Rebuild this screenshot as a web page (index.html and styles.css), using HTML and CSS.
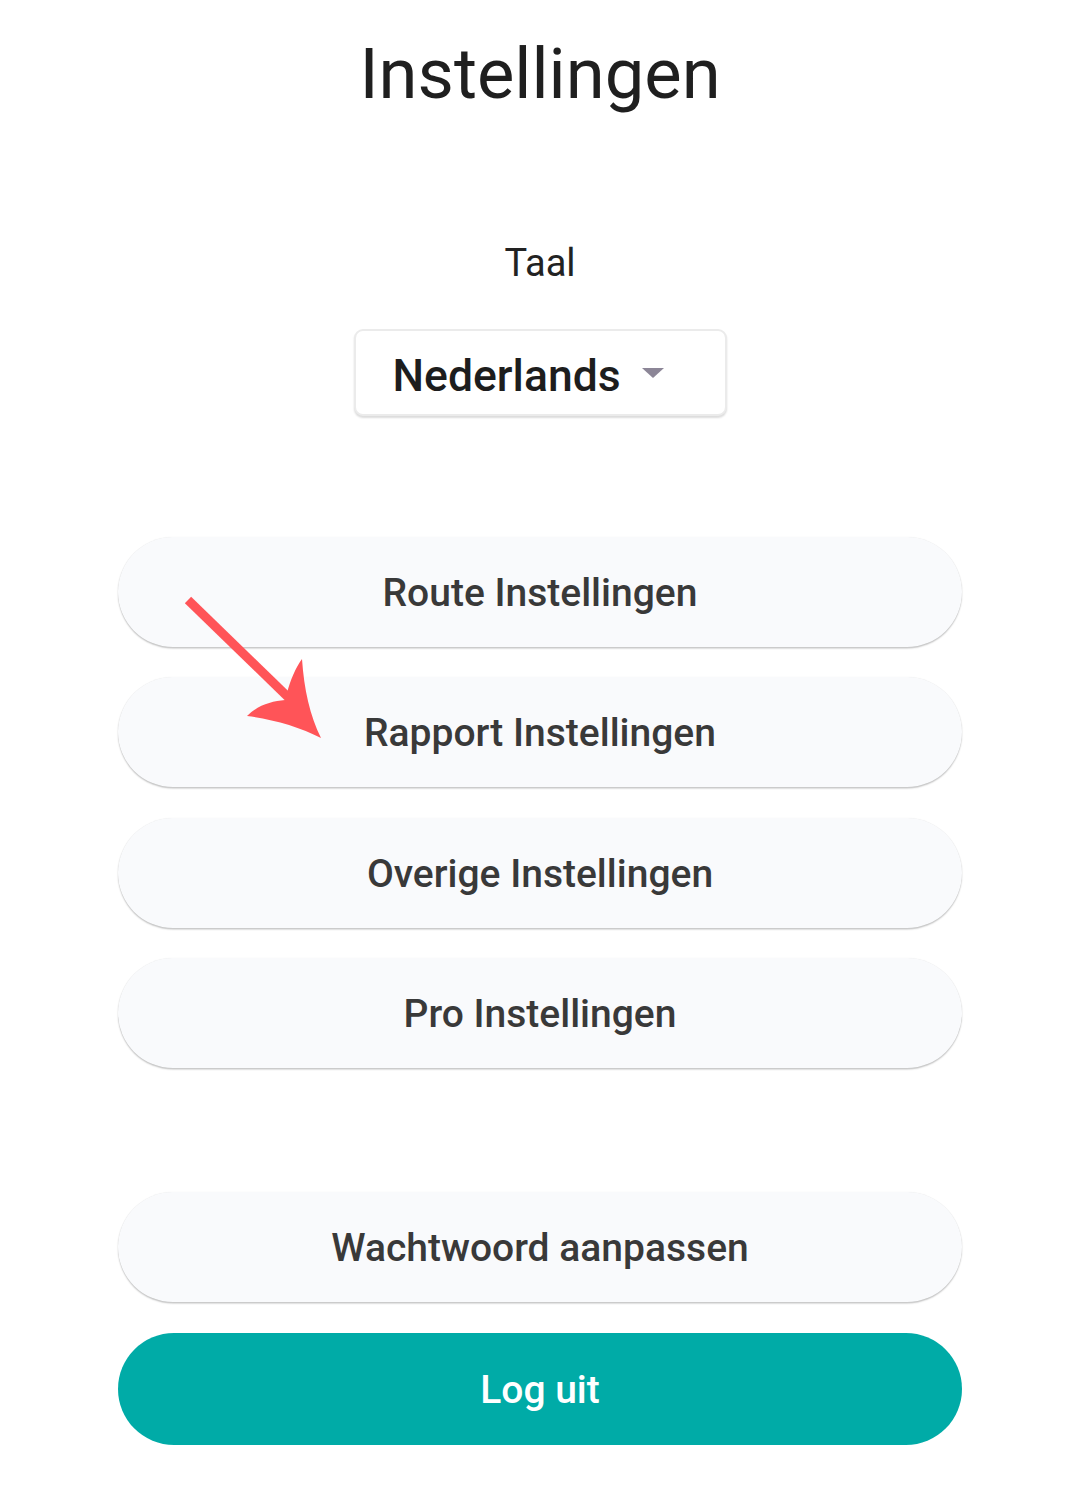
FILE: index.html
```html
<!DOCTYPE html>
<html lang="nl">
<head>
<meta charset="utf-8">
<title>Instellingen</title>
<link rel="stylesheet" href="styles.css">
</head>
<body>
<main class="page">
  <h1 class="title">Instellingen</h1>
  <div class="label">Taal</div>
  <div class="select-wrap">
    <div class="select">
      <span class="select-value">Nederlands</span>
      <span class="caret"></span>
    </div>
  </div>
  <div class="menu">
    <button class="btn">Route Instellingen</button>
    <button class="btn">Rapport Instellingen</button>
    <button class="btn">Overige Instellingen</button>
    <button class="btn">Pro Instellingen</button>
    <svg class="pointer" viewBox="178 588 160 160" width="160" height="160" aria-hidden="true">
      <line x1="188" y1="601" x2="290" y2="700" stroke="#ff5458" stroke-width="9"/>
      <path d="M247,717 C258,706 272,702 285,701 L287,694 C290,682 296,668 302,660 C304,690 310,717 321,739 C300,728 272,720 247,717 Z" fill="#ff5458"/>
    </svg>
  </div>
  <div class="account">
    <button class="btn">Wachtwoord aanpassen</button>
    <button class="btn btn-primary">Log uit</button>
  </div>
</main>
</body>
</html>
```

FILE: styles.css
```css
* { box-sizing: border-box; }
html, body {
  margin: 0;
  padding: 0;
  background: #ffffff;
}
body {
  font-family: Roboto, "Noto Sans", "Liberation Sans", sans-serif;
  color: #212121;
}
.page {
  width: 844px;
  margin: 0 auto;
  padding-top: 33px;
  display: flex;
  flex-direction: column;
}
.title {
  margin: 0;
  font-size: 70.5px;
  font-weight: 400;
  line-height: 82px;
  text-align: center;
  color: #1f1f1f;
}
.label {
  margin-top: 126px;
  font-size: 38px;
  line-height: 45px;
  text-align: center;
  color: #222222;
}
.select-wrap {
  margin-top: 43px;
  display: flex;
  justify-content: center;
}
.select {
  display: inline-flex;
  align-items: center;
  width: 373px;
  height: 87px;
  padding: 19px 61px 12px 37px;
  border: 2px solid #ebebeb;
  border-radius: 9px;
  box-shadow: 0 2px 2px rgba(0, 0, 0, 0.14);
  background: #fff;
}
.select-value {
  font-size: 44.5px;
  font-weight: 500;
  line-height: 52px;
  color: #1d1d1d;
}
.caret {
  margin-left: auto;
  width: 0;
  height: 0;
  border-left: 11px solid transparent;
  border-right: 11px solid transparent;
  border-top: 10px solid #8c8697;
  margin-top: -6px;
}
.menu {
  position: relative;
  margin-top: 121px;
  display: flex;
  flex-direction: column;
  gap: 30.4px;
}
.account {
  margin-top: 124px;
  display: flex;
  flex-direction: column;
  gap: 31px;
}
.btn {
  display: flex;
  align-items: center;
  justify-content: center;
  width: 100%;
  height: 110px;
  border: none;
  border-radius: 56px;
  background: #f9fafc;
  box-shadow: 0 1.5px 1.5px rgba(0, 0, 0, 0.22), 0 0 1px rgba(0, 0, 0, 0.10);
  font-family: Roboto, "Noto Sans", "Liberation Sans", sans-serif;
  font-size: 39px;
  font-weight: 500;
  color: #393939;
  padding: 2px 0 0;
  cursor: pointer;
}
.btn-primary {
  height: 112px;
  background: #00aba7;
  color: #ffffff;
  box-shadow: none;
}
.pointer {
  position: absolute;
  left: 60px;
  top: 50px;
  pointer-events: none;
}
```
